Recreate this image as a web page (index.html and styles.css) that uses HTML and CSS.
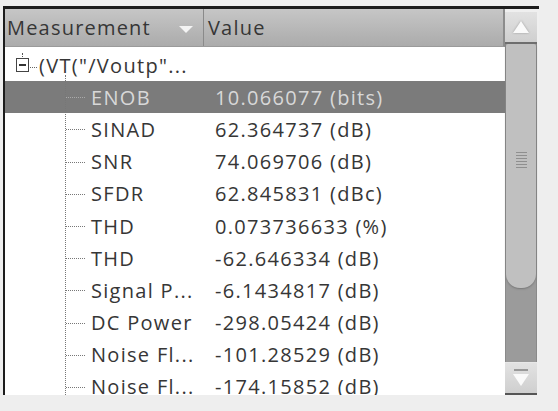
FILE: index.html
```html
<!DOCTYPE html>
<html lang="en">
<head>
    <meta charset="UTF-8">
    <title>Measurements</title>
    <link rel="stylesheet" href="styles.css">
</head>
<body>
    <div class="frame">
        <div class="tree">
            <div class="tree-header">
                <div class="col-name">
                    <span>Measurement</span>
                    <span class="sort-arrow"></span>
                </div>
                <div class="col-value">Value</div>
            </div>
            <div class="tree-body">
                <div class="row root">
                    <span class="expander"></span>
                    <span class="root-label">(VT("/Voutp"...</span>
                </div>
                <div class="children">
                    <div class="row child selected"><span class="name">ENOB</span><span class="value">10.066077 (bits)</span></div>
                    <div class="row child"><span class="name">SINAD</span><span class="value">62.364737 (dB)</span></div>
                    <div class="row child"><span class="name">SNR</span><span class="value">74.069706 (dB)</span></div>
                    <div class="row child"><span class="name">SFDR</span><span class="value">62.845831 (dBc)</span></div>
                    <div class="row child"><span class="name">THD</span><span class="value">0.073736633 (%)</span></div>
                    <div class="row child"><span class="name">THD</span><span class="value">-62.646334 (dB)</span></div>
                    <div class="row child"><span class="name">Signal P...</span><span class="value">-6.1434817 (dB)</span></div>
                    <div class="row child"><span class="name">DC Power</span><span class="value">-298.05424 (dB)</span></div>
                    <div class="row child"><span class="name">Noise Fl...</span><span class="value">-101.28529 (dB)</span></div>
                    <div class="row child"><span class="name">Noise Fl...</span><span class="value">-174.15852 (dB)</span></div>
                </div>
            </div>
        </div>
        <div class="scrollbar">
            <div class="scroll-btn up"><span class="arrow-up"></span></div>
            <div class="track">
                <div class="thumb">
                    <div class="grip">
                        <i></i><i></i><i></i><i></i><i></i><i></i>
                    </div>
                </div>
            </div>
            <div class="scroll-btn down"><span class="arrow-down"></span></div>
        </div>
    </div>
</body>
</html>
```

FILE: styles.css
```css
body {
    margin: 0;
    background-color: #eeeeee;
    font-family: "Open Sans", "Noto Sans", sans-serif;
    color: #363636;
    overflow: hidden;
}

.frame {
    margin: 6px 0 0 3px;
    width: 534px;
    height: 386px;
    border-top: 3px solid #1c1c1c;
    border-left: 2px solid #1c1c1c;
    display: flex;
    overflow: hidden;
}

.tree {
    flex: 1;
    background: #fff;
    display: flex;
    flex-direction: column;
    overflow: hidden;
}

.tree-header {
    height: 37px;
    display: flex;
    align-items: center;
    background: linear-gradient(#c6c6c6, #ababab);
    border-bottom: 1px solid #9a9a9a;
    border-right: 2px solid #8c8c8c;
    font-size: 20px;
    letter-spacing: 1.2px;
    flex-shrink: 0;
}

.col-name {
    width: 199px;
    height: 100%;
    padding: 0 10px 0 2px;
    box-sizing: border-box;
    display: flex;
    align-items: center;
    justify-content: space-between;
    border-right: 1px solid #8a8a8a;
}

.sort-arrow {
    width: 0;
    height: 0;
    border-left: 7px solid transparent;
    border-right: 7px solid transparent;
    border-top: 7px solid #f4f4f4;
    margin-top: 3px;
}

.col-value {
    padding-left: 4px;
}

.tree-body {
    padding-top: 2px;
    font-size: 20px;
    letter-spacing: 1.3px;
}

.row {
    height: 32.2px;
    display: flex;
    align-items: center;
    position: relative;
    white-space: nowrap;
}

.root {
    padding-left: 11px;
}

.expander {
    width: 11px;
    height: 12px;
    border: 1px solid #444;
    position: relative;
    margin-right: 1px;
}

.expander::before {
    content: "";
    position: absolute;
    left: 2px;
    right: 2px;
    top: 5px;
    border-top: 2px solid #333;
}

.expander::after {
    content: "";
    position: absolute;
    left: 5px;
    top: -6px;
    height: 4px;
    border-left: 1px dotted #555;
}

.root-label::before {
    content: "";
    display: inline-block;
    width: 7px;
    border-top: 1px dotted #666;
    vertical-align: middle;
    margin-right: 2px;
}

.children {
    position: relative;
}

.children::before {
    content: "";
    position: absolute;
    left: 60px;
    top: -6px;
    bottom: 0;
    border-left: 1px dotted #777;
    z-index: 1;
}

.child {
    padding-left: 86px;
}

.child::before {
    content: "";
    position: absolute;
    left: 61px;
    width: 19px;
    top: 16px;
    border-top: 1px dotted #777;
}

.child .name {
    width: 124px;
}

.selected {
    background: #7b7b7b;
    color: #d8d8d8;
}

.selected::before {
    border-top-color: #aaa;
}

.scrollbar {
    width: 32px;
    display: flex;
    flex-direction: column;
    background: #efefef;
    padding-top: 3px;
    padding-right: 2px;
}

.scroll-btn {
    height: 30px;
    background: linear-gradient(#e2e2e2, #cfcfcf);
    display: flex;
    align-items: center;
    justify-content: center;
    flex-shrink: 0;
}

.scroll-btn.up {
    border-bottom: 2px solid #6e6e6e;
}

.scroll-btn.down {
    border-bottom: 2px solid #555;
    border-top: 1px solid #e8e8e8;
}

.arrow-up {
    width: 0;
    height: 0;
    border-left: 8px solid transparent;
    border-right: 8px solid transparent;
    border-bottom: 12px solid #fafafa;
    filter: drop-shadow(0 0 1px #999);
}

.arrow-down {
    width: 0;
    height: 0;
    border-left: 8px solid transparent;
    border-right: 8px solid transparent;
    border-top: 12px solid #fafafa;
    margin-top: 4px;
    position: relative;
}

.arrow-down::before {
    content: "";
    position: absolute;
    left: -7px;
    top: -17px;
    width: 14px;
    border-top: 2px solid #999;
}

.track {
    flex: 1;
    background: #9b9b9b;
    border-left: 1px solid #8a8a8a;
    border-right: 1px solid #8a8a8a;
}

.thumb {
    height: 244px;
    background: #c0c0c0;
    border-radius: 2px 2px 14px 14px;
    box-shadow: 0 1px 2px #777;
    display: flex;
    justify-content: center;
    align-items: center;
}

.grip {
    display: flex;
    flex-direction: column;
    gap: 2px;
    margin-top: -12px;
}

.grip i {
    display: block;
    width: 11px;
    height: 1px;
    background: #8f8f8f;
}
```
